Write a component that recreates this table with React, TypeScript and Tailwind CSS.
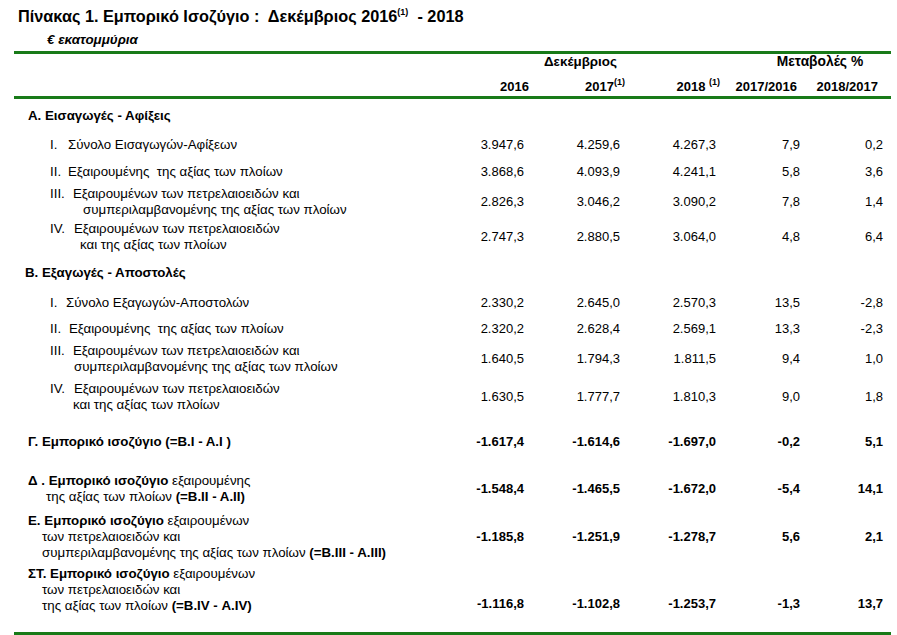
import React from "react";

type Line = { pl: string; content: React.ReactNode };
type Row = {
  mt: string;
  lines: Line[];
  nums?: string[];
  bold?: boolean;
  align?: string;
};

const N = (n: string, w: string) => <span className={`inline-block ${w}`}>{n}</span>;

const rows: Row[] = [
  { mt: "mt-[9px]", lines: [{ pl: "pl-[28px]", content: <b>Α. Εισαγωγές - Αφίξεις</b> }] },
  {
    mt: "mt-[13px]",
    lines: [{ pl: "pl-[50px]", content: <>{N("I.", "w-[18px]")}Σύνολο Εισαγωγών-Αφίξεων</> }],
    nums: ["3.947,6", "4.259,6", "4.267,3", "7,9", "0,2"],
  },
  {
    mt: "mt-[11px]",
    lines: [{ pl: "pl-[50px]", content: <>{N("II.", "w-[18px]")}Εξαιρουμένης&nbsp; της αξίας των πλοίων</> }],
    nums: ["3.868,6", "4.093,9", "4.241,1", "5,8", "3,6"],
  },
  {
    mt: "mt-[6px]",
    lines: [
      { pl: "pl-[50px]", content: <>{N("III.", "w-[23px]")}Εξαιρουμένων των πετρελαιοειδών και</> },
      { pl: "pl-[83px]", content: <>συμπεριλαμβανομένης της αξίας των πλοίων</> },
    ],
    nums: ["2.826,3", "3.046,2", "3.090,2", "7,8", "1,4"],
  },
  {
    mt: "mt-[3px]",
    lines: [
      { pl: "pl-[50px]", content: <>{N("IV.", "w-[24px]")}Εξαιρουμένων των πετρελαιοειδών</> },
      { pl: "pl-[80px]", content: <>και της αξίας των πλοίων</> },
    ],
    nums: ["2.747,3", "2.880,5", "3.064,0", "4,8", "6,4"],
  },
  { mt: "mt-[12px]", lines: [{ pl: "pl-[25px]", content: <b>Β. Εξαγωγές - Αποστολές</b> }] },
  {
    mt: "mt-[14px]",
    lines: [{ pl: "pl-[50px]", content: <>{N("I.", "w-[16px]")}Σύνολο Εξαγωγών-Αποστολών</> }],
    nums: ["2.330,2", "2.645,0", "2.570,3", "13,5", "-2,8"],
  },
  {
    mt: "mt-[10px]",
    lines: [{ pl: "pl-[50px]", content: <>{N("II.", "w-[19px]")}Εξαιρουμένης&nbsp; της αξίας των πλοίων</> }],
    nums: ["2.320,2", "2.628,4", "2.569,1", "13,3", "-2,3"],
  },
  {
    mt: "mt-[6px]",
    lines: [
      { pl: "pl-[50px]", content: <>{N("III.", "w-[23px]")}Εξαιρουμένων των πετρελαιοειδών και</> },
      { pl: "pl-[74px]", content: <>συμπεριλαμβανομένης της αξίας των πλοίων</> },
    ],
    nums: ["1.640,5", "1.794,3", "1.811,5", "9,4", "1,0"],
  },
  {
    mt: "mt-[6px]",
    lines: [
      { pl: "pl-[50px]", content: <>{N("IV.", "w-[24px]")}Εξαιρουμένων των πετρελαιοειδών</> },
      { pl: "pl-[73px]", content: <>και της αξίας των πλοίων</> },
    ],
    nums: ["1.630,5", "1.777,7", "1.810,3", "9,0", "1,8"],
  },
  {
    mt: "mt-[21px]",
    bold: true,
    lines: [{ pl: "pl-[28px]", content: <b>Γ. Εμπορικό ισοζύγιο (=Β.Ι - Α.Ι )</b> }],
    nums: ["-1.617,4", "-1.614,6", "-1.697,0", "-0,2", "5,1"],
  },
  {
    mt: "mt-[23px]",
    bold: true,
    lines: [
      { pl: "pl-[28px]", content: <><b>Δ . Εμπορικό ισοζύγιο</b> εξαιρουμένης</> },
      { pl: "pl-[46px]", content: <>της αξίας των πλοίων <b>(=Β.ΙΙ - Α.ΙΙ)</b></> },
    ],
    nums: ["-1.548,4", "-1.465,5", "-1.672,0", "-5,4", "14,1"],
  },
  {
    mt: "mt-[8px]",
    bold: true,
    lines: [
      { pl: "pl-[28px]", content: <><b>Ε. Εμπορικό ισοζύγιο</b> εξαιρουμένων</> },
      { pl: "pl-[42px]", content: <>των πετρελαιοειδών και</> },
      { pl: "pl-[42px]", content: <>συμπεριλαμβανομένης της αξίας των πλοίων <b>(=Β.ΙΙΙ - Α.ΙΙΙ)</b></> },
    ],
    nums: ["-1.185,8", "-1.251,9", "-1.278,7", "5,6", "2,1"],
  },
  {
    mt: "mt-[5px]",
    bold: true,
    align: "items-end",
    lines: [
      { pl: "pl-[28px]", content: <><b>ΣΤ. Εμπορικό ισοζύγιο</b> εξαιρουμένων</> },
      { pl: "pl-[42px]", content: <>των πετρελαιοειδών και</> },
      { pl: "pl-[42px]", content: <>της αξίας των πλοίων <b>(=Β.IV - Α.IV)</b></> },
    ],
    nums: ["-1.116,8", "-1.102,8", "-1.253,7", "-1,3", "13,7"],
  },
];

const numW = ["w-[84px]", "w-[96px]", "w-[96px]", "w-[84px]", "w-[83px]"];

function Sup({ children }: { children: React.ReactNode }) {
  return <sup className="text-[9px] align-super leading-none relative -top-[1px]">{children}</sup>;
}

export default function App() {
  return (
    <div
      className="w-[897px] h-[635px] bg-white text-black overflow-hidden"
      style={{ fontFamily: '"Liberation Sans", Arial, sans-serif' }}
    >
      <div className="pt-[7px] pl-[18px] text-[16.3px] font-bold leading-[18px] whitespace-pre">
        {"Πίνακας 1. Εμπορικό Ισοζύγιο :  Δεκέμβριος 2016"}
        <Sup>(1)</Sup>
        {"  - 2018"}
      </div>
      <div className="mt-[7px] pl-[47px] text-[13.4px] font-bold italic leading-[16px]">€ εκατομμύρια</div>
      <div className="mt-[3px] ml-[14px] w-[877px] h-[3px] bg-[#187a18]" />
      {/* header */}
      <div className="flex text-[13px] font-bold leading-[16px]">
        <div className="w-[440px]" />
        <div className="w-[276px] text-center pl-[5px] text-[13.4px]">Δεκέμβριος</div>
        <div className="w-[167px] text-center pl-[41px] text-[13.8px]">Μεταβολές %</div>
      </div>
      <div className="mt-[9px] flex text-[13px] font-bold leading-[16px]">
        <div className="w-[440px]" />
        <div className="w-[89px] text-right">2016</div>
        <div className="w-[96px] text-right">
          2017<Sup>(1)</Sup>
        </div>
        <div className="w-[95px] text-right">
          2018 <Sup>(1)</Sup>
        </div>
        <div className="w-[77px] text-right">2017/2016</div>
        <div className="w-[81px] text-right">2018/2017</div>
      </div>
      <div className="mt-[1px] ml-[14px] w-[877px] h-[3px] bg-[#187a18]" />
      {rows.map((r, i) => (
        <div key={i} className={`${r.mt} flex ${r.align ?? "items-center"} text-[13px] leading-[16px]`}>
          <div className="w-[440px] whitespace-nowrap text-[13.3px]">
            {r.lines.map((l, j) => (
              <div key={j} className={l.pl}>
                {l.content}
              </div>
            ))}
          </div>
          {r.nums &&
            r.nums.map((n, k) => (
              <div
                key={k}
                className={`${numW[k]} text-right ${r.bold ? "font-bold" : ""} ${r.align ? "pb-[2px]" : ""}`}
              >
                {n}
              </div>
            ))}
        </div>
      ))}
      <div className="mt-[18px] ml-[14px] w-[877px] h-[3px] bg-[#187a18]" />
    </div>
  );
}
